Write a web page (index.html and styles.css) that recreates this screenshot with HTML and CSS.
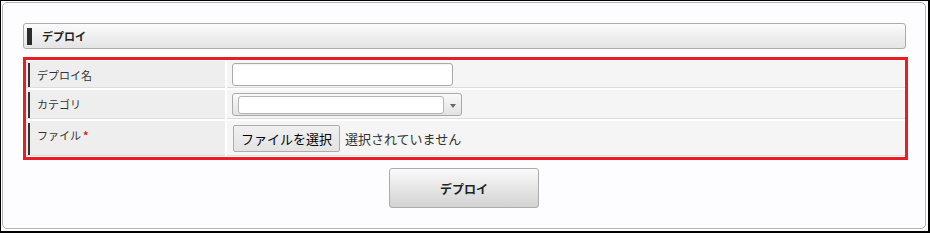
FILE: index.html
```html
<!DOCTYPE html>
<html lang="ja">
<head>
<meta charset="utf-8">
<title>デプロイ</title>
<link rel="stylesheet" href="styles.css">
</head>
<body>
<div class="frame">
  <div class="panel">
    <div class="section-header">
      <span class="section-bar"></span>
      <span class="section-title">デプロイ</span>
    </div>
    <div class="highlight">
      <div class="form-grid">
        <div class="label-cell"><div class="label">デプロイ名</div></div>
        <div class="value-cell"><input class="text-input" type="text"></div>

        <div class="label-cell"><div class="label">カテゴリ</div></div>
        <div class="value-cell">
          <div class="select-box">
            <div class="select-inner"></div>
            <div class="select-arrow"></div>
          </div>
        </div>

        <div class="label-cell"><div class="label">ファイル<span class="required">*</span></div></div>
        <div class="value-cell">
          <span class="file-button">ファイルを選択</span>
          <span class="file-status">選択されていません</span>
        </div>
      </div>
    </div>
    <div class="actions">
      <button class="deploy-button" type="button">デプロイ</button>
    </div>
  </div>
</div>
</body>
</html>
```

FILE: styles.css
```css
* { box-sizing: border-box; }

html, body {
  margin: 0;
  padding: 0;
  background: #ffffff;
}

body {
  font-family: "Noto Sans CJK JP", "Noto Sans", sans-serif;
  color: #333333;
}

.frame {
  width: 930px;
  height: 233px;
  border-top: 1px solid #000;
  border-left: 1px solid #000;
  border-right: 2px solid #000;
  border-bottom: 2px solid #000;
  padding: 1px 0 0 1px;
  background: #ffffff;
}

.panel {
  width: 924px;
  height: 227px;
  border: 1px solid #b5b5b5;
  border-radius: 5px;
  background: #fdfdff;
  padding: 20px 19px 0 20px;
}

.section-header {
  height: 26px;
  display: flex;
  align-items: center;
  border: 1px solid #acacac;
  border-radius: 3px;
  background: linear-gradient(#fbfbfb, #e4e4e4);
}

.section-bar {
  width: 5px;
  height: 17px;
  margin-left: 3px;
  background: #2b2b2b;
}

.section-title {
  margin-left: 10px;
  font-size: 11px;
  font-weight: bold;
  color: #222;
  line-height: 16px;
}

.highlight {
  margin-top: 8px;
  margin-right: -2px;
  border: 3px solid #ed1c24;
  background: #ffffff;
}

.form-grid {
  display: grid;
  grid-template-columns: 199px 1fr;
  grid-template-rows: 27px 29px 35px;
  column-gap: 2px;
  row-gap: 2px;
  padding: 1px 0;
  background: #ffffff;
}

.label-cell {
  display: flex;
  background: #eeeeee;
  border-bottom: 1px solid #dcdcdc;
  padding: 2px 0 0 2px;
}

.label {
  flex: 1;
  border-left: 2px solid #333333;
  padding: 5px 0 0 7px;
  font-size: 11px;
  line-height: 15px;
  color: #333;
}

.required {
  color: #ed1c24;
  margin-left: 2px;
  font-weight: bold;
}

.value-cell {
  display: flex;
  align-items: center;
  background: #f5f5f5;
  border-bottom: 1px solid #dcdcdc;
  padding-left: 5px;
}

.text-input {
  width: 221px;
  height: 23px;
  margin: 0;
  border: 1px solid #a9a9a9;
  border-radius: 3px;
  background: #ffffff;
  box-shadow: inset 0 1px 1px rgba(0,0,0,0.06);
  font: inherit;
  padding: 0 4px;
}

.select-box {
  position: relative;
  width: 230px;
  height: 23px;
  margin-top: 1px;
  border: 1px solid #a9a9a9;
  border-radius: 3px;
  background: linear-gradient(#fafafa, #e2e2e2);
  display: flex;
  align-items: center;
}

.select-inner {
  width: 206px;
  height: 18px;
  margin-left: 5px;
  border: 1px solid #b4b4b4;
  border-radius: 3px;
  background: #ffffff;
}

.select-arrow {
  margin-left: 6px;
  width: 0;
  height: 0;
  border-left: 3px solid transparent;
  border-right: 3px solid transparent;
  border-top: 4px solid #666666;
  margin-top: 2px;
}

.file-button {
  display: inline-flex;
  align-items: center;
  justify-content: center;
  width: 107px;
  height: 27px;
  margin-left: 1px;
  border: 1px solid #adadad;
  border-radius: 2px;
  background: linear-gradient(#f0f0f0, #e3e3e3);
  font-size: 13px;
  color: #000;
}

.file-status {
  margin-left: 5px;
  font-size: 13px;
  color: #333;
}

.actions {
  display: flex;
  justify-content: center;
  margin-top: 8px;
  padding-right: 1px;
}

.deploy-button {
  width: 150px;
  height: 40px;
  margin: 0;
  border: 1px solid #acacac;
  border-radius: 3px;
  background: linear-gradient(#fafafa, #d2d2d2);
  font-family: "Noto Sans CJK JP", "Noto Sans", sans-serif;
  font-size: 12px;
  font-weight: bold;
  color: #222;
  padding: 0;
}
```
